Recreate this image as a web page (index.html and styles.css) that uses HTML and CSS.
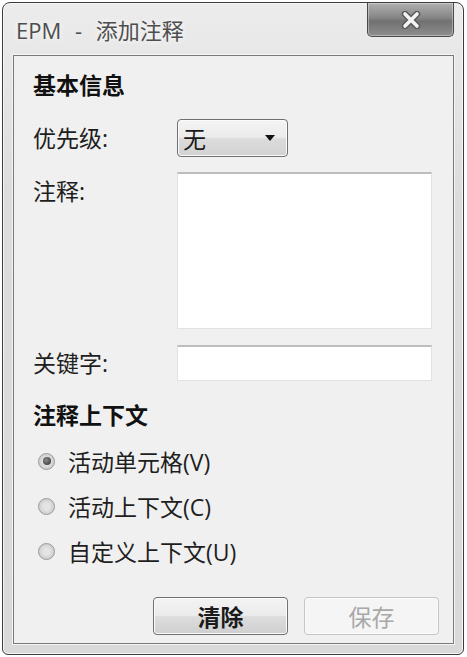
FILE: index.html
```html
<!DOCTYPE html>
<html lang="zh-CN">
<head>
    <meta charset="UTF-8">
    <meta name="viewport" content="width=device-width, initial-scale=1.0">
    <title>EPM - 添加注释</title>
    <link rel="stylesheet" href="styles.css">
</head>
<body>
    <div class="window">
        <div class="titlebar">
            <span class="title">EPM - 添加注释</span>
            <button class="close-btn" type="button" aria-label="关闭">
                <svg width="22" height="18" viewBox="0 0 22 18">
                    <path d="M5 3 L17 15 M17 3 L5 15" stroke="#5a5a5a" stroke-width="6.5" stroke-linecap="round"/>
                    <path d="M5 3 L17 15 M17 3 L5 15" stroke="#f4f4f4" stroke-width="3.6" stroke-linecap="round"/>
                </svg>
            </button>
        </div>

        <div class="client">
            <h2 class="section-title">基本信息</h2>

            <div class="form-row">
                <label class="field-label">优先级:</label>
                <div class="select">
                    <span>无</span>
                    <svg width="10" height="6" viewBox="0 0 10 6"><path d="M0 0 H10 L5 6 Z" fill="#111"/></svg>
                </div>
            </div>

            <div class="form-row">
                <label class="field-label">注释:</label>
                <textarea class="textbox notes"></textarea>
            </div>

            <div class="form-row">
                <label class="field-label">关键字:</label>
                <input class="textbox keyword" type="text">
            </div>

            <h2 class="section-title context-title">注释上下文</h2>

            <div class="radio-list">
                <label class="radio"><input type="radio" name="ctx" checked><span>活动单元格(V)</span></label>
                <label class="radio"><input type="radio" name="ctx"><span>活动上下文(C)</span></label>
                <label class="radio"><input type="radio" name="ctx"><span>自定义上下文(U)</span></label>
            </div>

            <div class="actions">
                <button class="btn primary" type="button">清除</button>
                <button class="btn" type="button" disabled>保存</button>
            </div>
        </div>
    </div>
</body>
</html>
```

FILE: styles.css
```css
* {
    margin: 0;
    padding: 0;
    box-sizing: border-box;
}

body {
    background: #ffffff;
    font-family: "Open Sans", "Noto Sans CJK SC", sans-serif;
    color: #1a1a1a;
}

.window {
    margin: 2px 0 0 2px;
    width: 462px;
    height: 653px;
    border: 1px solid #3c3c3c;
    border-radius: 8px 8px 6px 6px;
    background: linear-gradient(to bottom, #ececec, #dcdcdc 30%, #d9d9d9);
    box-shadow: inset 0 0 0 1px #f6f6f6;
    padding: 0 9px 10px 10px;
    display: flex;
    flex-direction: column;
}

.titlebar {
    height: 52px;
    display: flex;
    justify-content: space-between;
    align-items: flex-start;
}

.title {
    margin-top: 12px;
    margin-left: 3px;
    font-size: 22px;
    line-height: 30px;
    word-spacing: 8px;
    color: #4e4e4e;
    text-shadow: 0 0 6px #ffffff;
}

.close-btn {
    width: 87px;
    height: 34px;
    border: 1px solid #4a4a4a;
    border-top: none;
    border-radius: 0 0 5px 5px;
    background: linear-gradient(to bottom, #b0b0b0, #858585 45%, #717171 55%, #8e8e8e);
    box-shadow: inset 0 0 0 1px rgba(255, 255, 255, 0.35);
    display: flex;
    justify-content: center;
    align-items: center;
}

.client {
    flex: 1;
    border: 1px solid #7a7a7a;
    box-shadow: 0 0 0 1px #f4f4f4;
    background: #f0f0f0;
    padding: 14px 14px 8px 19px;
    display: flex;
    flex-direction: column;
}

.section-title {
    font-size: 23px;
    font-weight: bold;
    line-height: 30px;
    color: #111;
}

.form-row {
    display: grid;
    grid-template-columns: 144px 255px;
    align-items: start;
    margin-top: 15px;
}

.form-row:first-of-type {
    margin-top: 19px;
}

.field-label {
    font-size: 23px;
    line-height: 38px;
    color: #1e1e1e;
}

.select {
    width: 111px;
    height: 38px;
    border: 1px solid #707070;
    border-radius: 4px;
    background: linear-gradient(to bottom, #f4f4f4, #ebebeb 48%, #dcdcdc 52%, #d2d2d2);
    box-shadow: inset 0 0 0 1px #fbfbfb;
    display: flex;
    justify-content: space-between;
    align-items: center;
    padding: 0 12px 0 5px;
    font-size: 23px;
}

.textbox {
    display: block;
    width: 255px;
    background: #ffffff;
    border: 1px solid #e2e2e2;
    border-top: 2px solid #bdbdbd;
    font-family: inherit;
    font-size: 18px;
    resize: none;
    outline: none;
}

.notes {
    height: 157px;
}

.keyword {
    height: 36px;
    margin-top: 1px;
}

.context-title {
    margin-top: 18px;
}

.radio-list {
    display: flex;
    flex-direction: column;
    gap: 15px;
    margin-top: 16px;
}

.radio {
    display: flex;
    align-items: center;
    height: 30px;
    padding-left: 5px;
    font-size: 23px;
    color: #1e1e1e;
}

.radio input {
    appearance: none;
    width: 17px;
    height: 17px;
    border-radius: 50%;
    border: 1px solid #9a9a9a;
    background: radial-gradient(circle, #e4e4e4 30%, #cfcfcf 70%, #f2f2f2 100%);
    margin-right: 13px;
    display: grid;
    place-items: center;
}

.radio input:checked::after {
    content: "";
    width: 8px;
    height: 8px;
    border-radius: 50%;
    background: radial-gradient(circle at 40% 40%, #8a8a8a, #2e2e2e);
}

.actions {
    margin-top: auto;
    display: flex;
    justify-content: flex-end;
    gap: 16px;
}

.btn {
    width: 135px;
    height: 38px;
    border: 1px solid #707070;
    border-radius: 4px;
    background: linear-gradient(to bottom, #f4f4f4, #ebebeb 48%, #dddddd 52%, #cfcfcf);
    box-shadow: inset 0 0 0 1px #fbfbfb;
    font-family: inherit;
    font-size: 23px;
    color: #1a1a1a;
}

.btn.primary {
    font-weight: bold;
}

.btn:disabled {
    border-color: #c4c4c4;
    background: #f5f5f5;
    color: #a8a8a8;
}
```
